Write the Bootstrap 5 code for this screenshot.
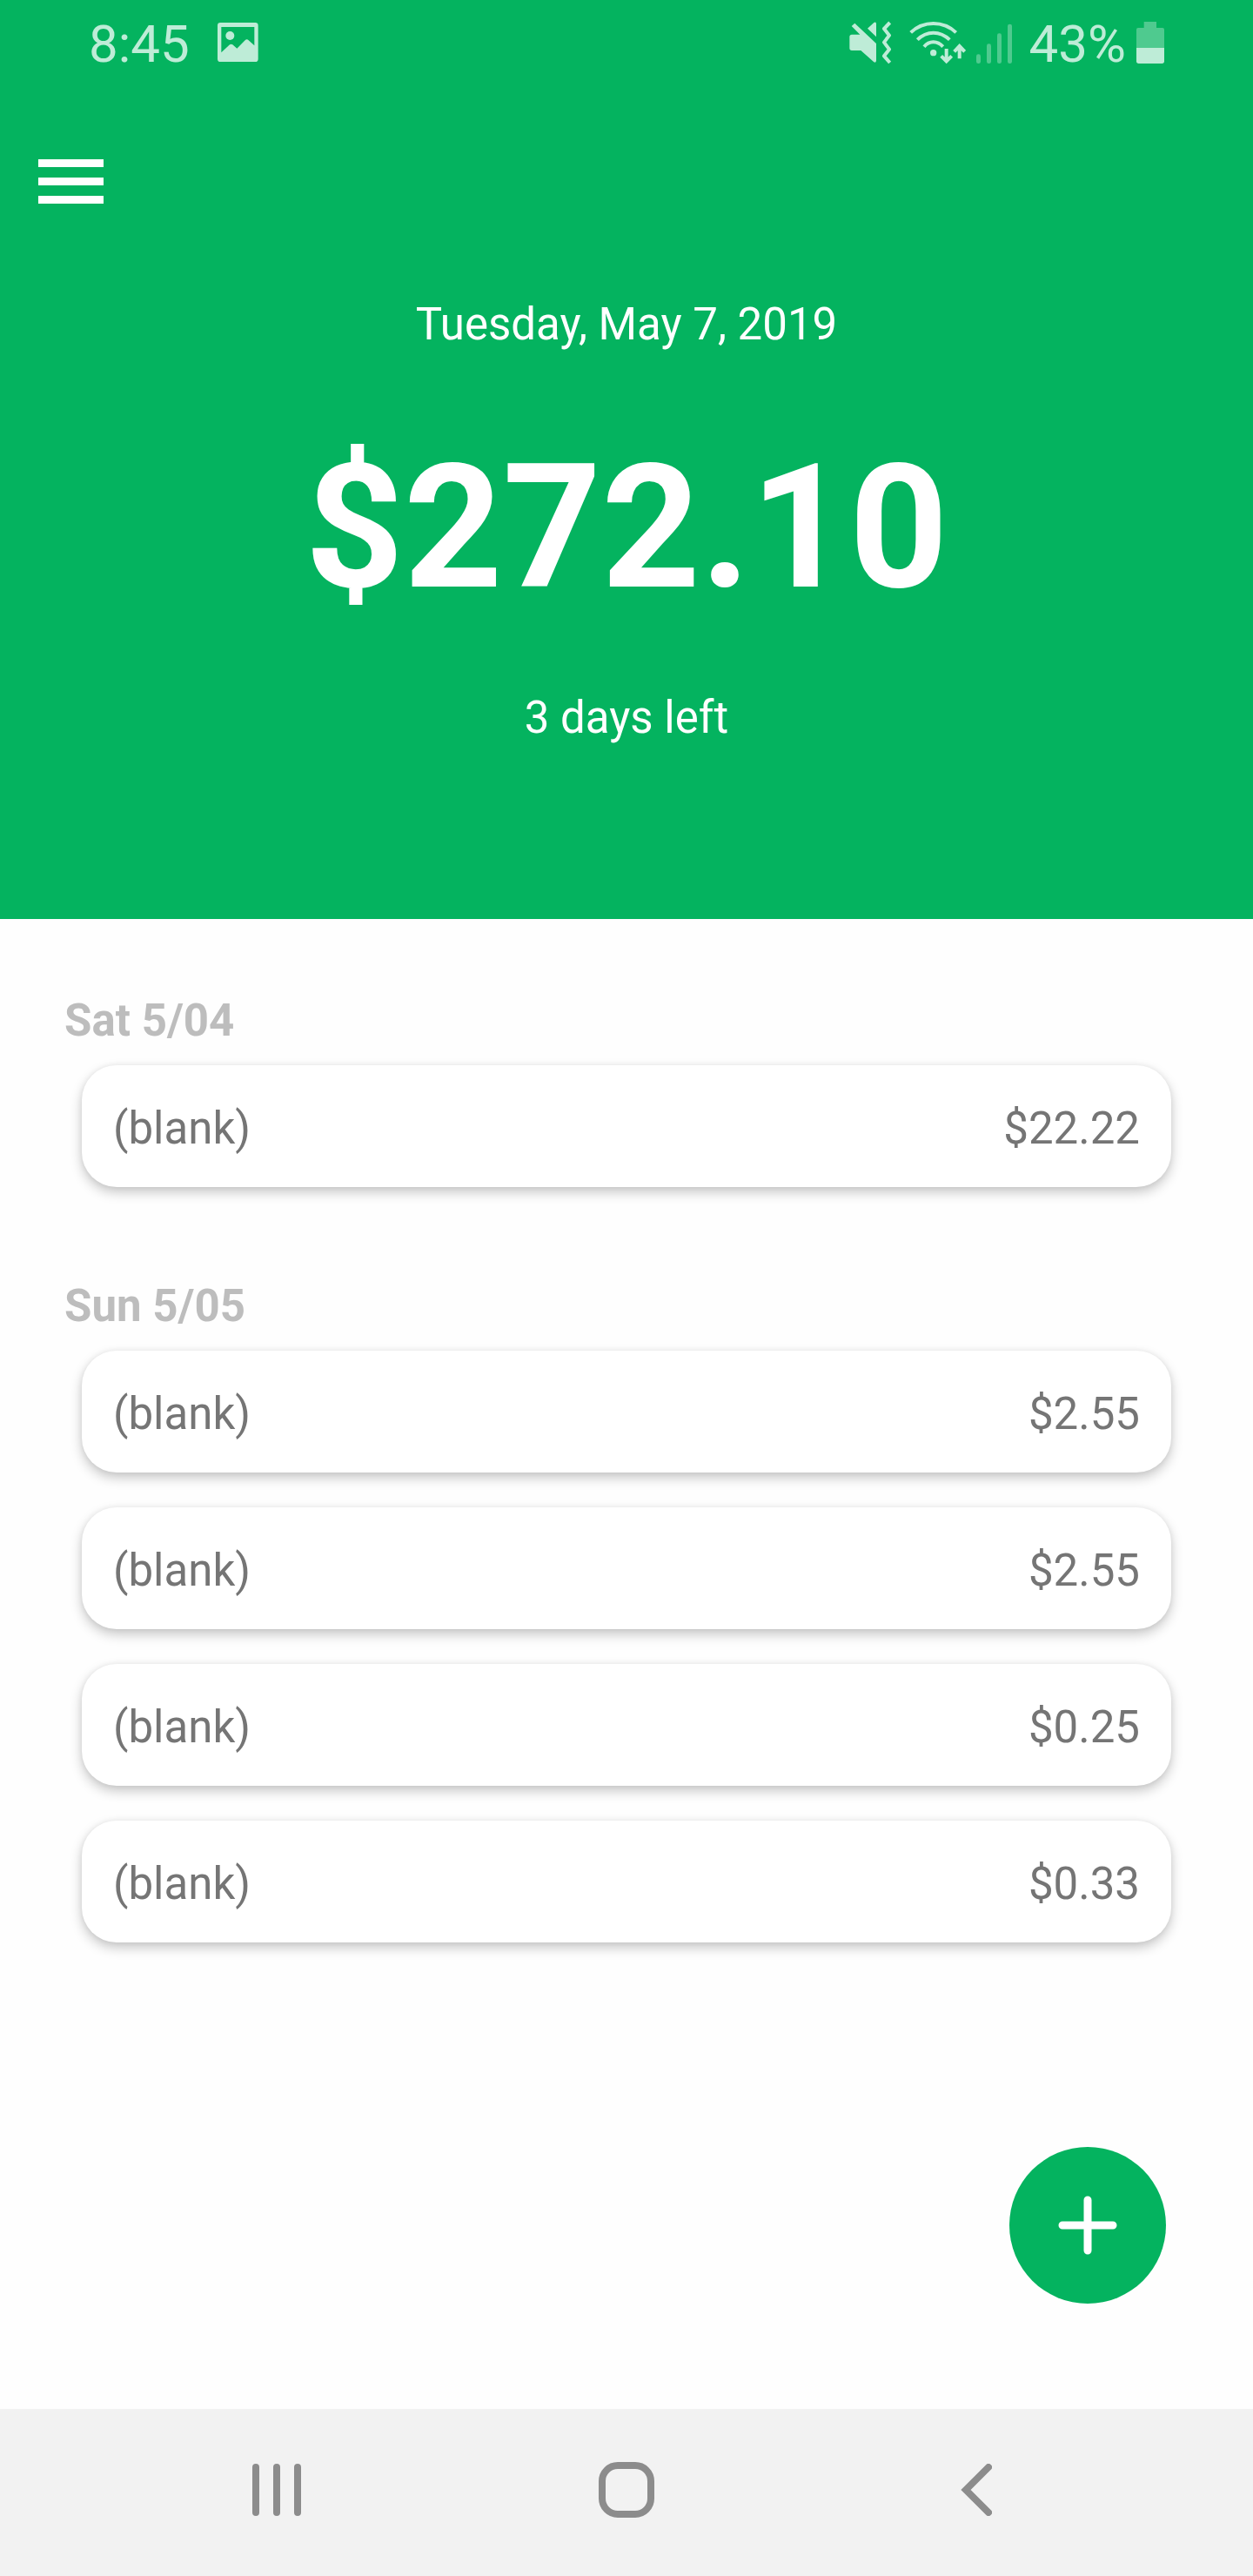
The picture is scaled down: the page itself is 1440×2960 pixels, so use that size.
<!DOCTYPE html>
<html lang="en">
<head>
<meta charset="utf-8">
<meta name="viewport" content="width=device-width, initial-scale=1">
<title>Budget</title>
<link href="https://cdn.jsdelivr.net/npm/bootstrap@5.3.0/dist/css/bootstrap.min.css" rel="stylesheet">
<style>
  :root { --brand: #04b35f; --soft: #beecd7; --dim: #4fca8f; }
  body { font-family: Roboto, "Liberation Sans", sans-serif; font-size: 51px; line-height: 60px; background: #fefefe; color: #757575; }
  svg { display: block; flex: none; }
  .hero { background: var(--brand); padding-bottom: 201px; }
  .status { padding: 12px 102px; font-size: 60px; line-height: 70px; color: var(--soft); }
  .clock { gap: 32px; }
  .net { gap: 12px; }
  .faint { fill: var(--dim); }
  .menu-row { padding: 85px 44px 0; }
  .plain { background: none; border: 0; padding: 0; }
  .date { margin-top: 109px; }
  .amount { font-size: 198px; line-height: 200px; margin: 103px 0 89px; }
  .entries { padding: 87px 74px 121px; }
  .day { margin-bottom: 107px; }
  .day-label { font-size: 51px; line-height: 60px; color: #bdbdbd; margin-bottom: 21px; }
  .day-list { gap: 40px; margin: 0 20px; }
  .entry { border: 0; border-radius: 40px; padding: 43px 36px 37px; background: #fff; color: inherit;
    box-shadow: 0 6px 14px rgba(0,0,0,.22), 0 0 6px rgba(0,0,0,.06); }
  .add { width: 180px; height: 180px; margin-right: 26px; background: var(--brand); }
  .keys { background: #f2f2f2; height: 192px; padding: 0 117px 6px; color: #8c8c8c; }
  .keys button { color: inherit; flex: 1 1 0; }
</style>
</head>
<body>
<div class="d-flex flex-column min-vh-100">
  <header class="hero text-white text-center">
    <div class="status d-flex justify-content-between align-items-center">
      <div class="clock d-flex align-items-center">
        <span class="pt-1">8:45</span>
        <svg width="47" height="50" viewBox="749 72 141 150" aria-hidden="true">
          <path fill="currentColor" fill-rule="evenodd" d="M759 78H879q10 0 10 10V203q0 10-10 10H759q-10 0-10-10V88q0-10 10-10ZM762 93V181L791 154q5-4 10 0L816 167 844 139q6-6 12 0L876 157V93Z"/>
          <circle cx="792" cy="123" r="15" fill="currentColor"/>
        </svg>
      </div>
      <div class="net d-flex align-items-center">
        <svg class="me-2" width="49" height="50" viewBox="45 72 147 150" aria-hidden="true">
          <path fill="currentColor" d="M53 90 64 80 138 150V210q-2 8-9 3L85 174H54q-8 0-8-8V127q0-8 8-8H82ZM108 98 130 78q6-4 8 3V127Z"/>
          <path fill="none" stroke="currentColor" stroke-width="12" stroke-linejoin="round" d="M185 78 165 99 183 122 165 146 183 170 165 193 185 216"/>
        </svg>
        <svg width="65" height="50" viewBox="248 72 195 150" aria-hidden="true">
          <g fill="none" stroke="currentColor" stroke-width="12">
            <path d="M253 112Q286 81 331 81T409 112"/>
            <path d="M276 137Q300 113 331 113T387 137"/>
            <path d="M299 161Q312 145 331 145T364 161"/>
            <path d="M376 168V211M358 193 376 211 394 193M421 202V159M403 178 421 159 439 178"/>
          </g>
          <circle cx="331" cy="182" r="11" fill="currentColor"/>
        </svg>
        <svg class="faint" width="41" height="50" viewBox="480 72 123 150" aria-hidden="true">
          <rect x="480" y="187" width="15" height="32" rx="7"/><rect x="516" y="151" width="15" height="68" rx="7"/><rect x="552" y="115" width="15" height="104" rx="7"/><rect x="588" y="83" width="15" height="136" rx="7"/>
        </svg>
        <span class="pt-1 ms-2">43%</span>
        <svg width="32" height="50" viewBox="1038 72 96 150" aria-hidden="true">
          <path class="faint" d="M1038 165V102q0-6 6-6H1064V75H1107V96H1128q6 0 6 6V165Z"/>
          <path fill="currentColor" d="M1038 165H1134V211q0 8-8 8H1046q-8 0-8-8Z"/>
        </svg>
      </div>
    </div>
    <div class="menu-row d-flex">
      <button class="plain text-white" type="button" aria-label="Menu">
        <svg width="75" height="51" viewBox="0 0 75 51" fill="currentColor"><path d="M0 0H75V9H0ZM0 21H75V30H0ZM0 42H75V51H0Z"/></svg>
      </button>
    </div>
    <div class="date">Tuesday, May 7, 2019</div>
    <h1 class="amount fw-bold">$272.10</h1>
    <div>3 days left</div>
  </header>

  <main class="entries flex-grow-1 d-flex flex-column">
    <section class="day">
      <h2 class="day-label fw-bold">Sat 5/04</h2>
      <ul class="day-list list-unstyled d-flex flex-column">
        <li class="entry card flex-row justify-content-between"><span>(blank)</span><span>$22.22</span></li>
      </ul>
    </section>
    <section class="day">
      <h2 class="day-label fw-bold">Sun 5/05</h2>
      <ul class="day-list list-unstyled d-flex flex-column">
        <li class="entry card flex-row justify-content-between"><span>(blank)</span><span>$2.55</span></li>
        <li class="entry card flex-row justify-content-between"><span>(blank)</span><span>$2.55</span></li>
        <li class="entry card flex-row justify-content-between"><span>(blank)</span><span>$0.25</span></li>
        <li class="entry card flex-row justify-content-between"><span>(blank)</span><span>$0.33</span></li>
      </ul>
    </section>
    <button class="add btn rounded-circle p-0 border-0 mt-auto align-self-end d-flex align-items-center justify-content-center" type="button" aria-label="Add entry">
      <svg width="68" height="68" viewBox="0 0 68 68" fill="none" stroke="#fff" stroke-width="9" stroke-linecap="round"><path d="M34 5V63M5 34H63"/></svg>
    </button>
  </main>

  <nav class="keys d-flex align-items-stretch" aria-label="System">
    <button class="plain d-flex align-items-center justify-content-center" type="button" aria-label="Recent apps">
      <svg width="56" height="60" viewBox="0 0 56 60" fill="currentColor"><rect width="8" height="60" rx="4"/><rect x="24" width="8" height="60" rx="4"/><rect x="48" width="8" height="60" rx="4"/></svg>
    </button>
    <button class="plain d-flex align-items-center justify-content-center" type="button" aria-label="Home">
      <svg width="64" height="64" viewBox="0 0 64 64" fill="none" stroke="currentColor" stroke-width="8"><rect x="4" y="4" width="56" height="56" rx="18"/></svg>
    </button>
    <button class="plain d-flex align-items-center justify-content-center" type="button" aria-label="Back">
      <svg width="36" height="60" viewBox="0 0 36 60" fill="none" stroke="currentColor" stroke-width="8" stroke-linecap="round"><path d="M32 4 6 30 32 56"/></svg>
    </button>
  </nav>
</div>
<script src="https://cdn.jsdelivr.net/npm/bootstrap@5.3.0/dist/js/bootstrap.bundle.min.js"></script>
</body>
</html>
